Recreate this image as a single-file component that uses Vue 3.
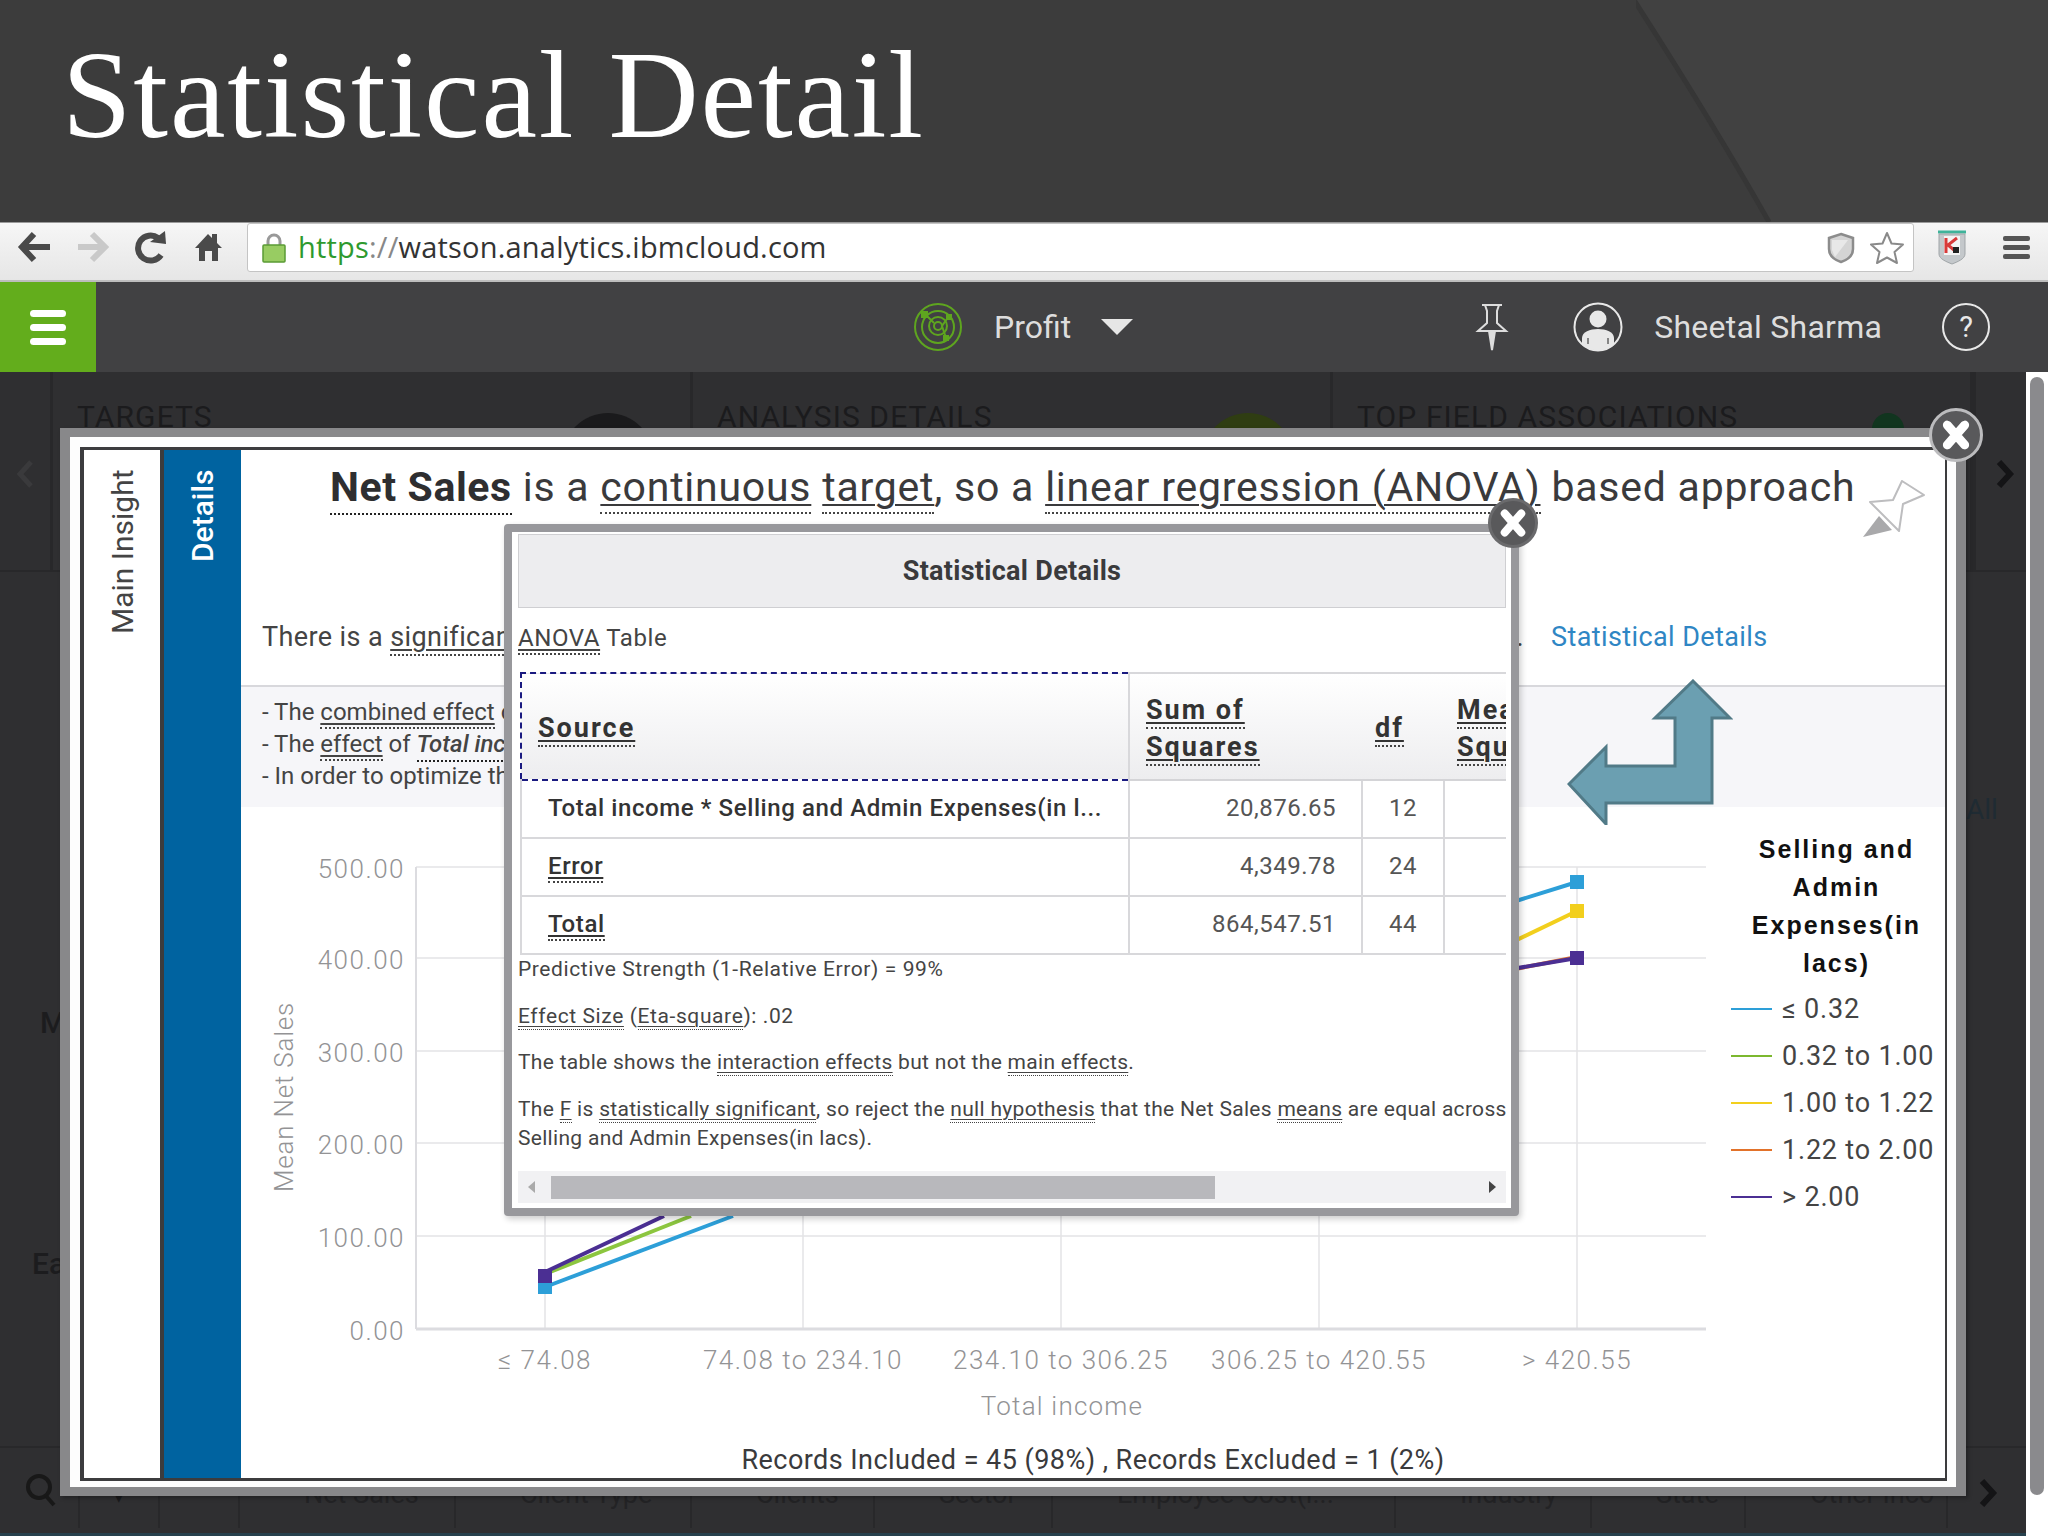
<script setup>
const cards = [
  { title: 'TARGETS', dot: 'card__dot--dark' },
  { title: 'ANALYSIS DETAILS', dot: 'card__dot--green' },
  { title: 'TOP FIELD ASSOCIATIONS', dot: 'card__dot--teal' },
]

const filters = [
  { name: 'Net Sales', width: 216 },
  { name: 'Client Type', width: 236 },
  { name: 'Clients', width: 183 },
  { name: 'Sector', width: 178 },
  { name: 'Employee Cost(i...', width: 343 },
  { name: 'Industry', width: 196 },
  { name: 'State', width: 154 },
  { name: 'Other Inco', width: 202 },
]

const yTicks = [
  { label: '500.00', y: 867 },
  { label: '400.00', y: 958 },
  { label: '300.00', y: 1051 },
  { label: '200.00', y: 1143 },
  { label: '100.00', y: 1236 },
  { label: '0.00', y: 1329 },
]

const xTicks = [
  { label: '≤ 74.08', x: 545 },
  { label: '74.08 to 234.10', x: 803 },
  { label: '234.10 to 306.25', x: 1061 },
  { label: '306.25 to 420.55', x: 1319 },
  { label: '> 420.55', x: 1577 },
]

const series = [
  { color: '#2d9fd8', points: '545,1287 733,1216', end: '1500,906 1577,882', y0: 1287, y1: 882 },
  { color: '#f2cf1d', points: '', end: '1500,948 1577,911', y0: null, y1: 911 },
  { color: '#e2722a', points: '', end: '1500,972 1577,957', y0: null, y1: null },
  { color: '#8cc63f', points: '545,1274 691,1216', end: '', y0: null, y1: null },
  { color: '#4b2f93', points: '545,1272 664,1216', end: '1500,971 1577,958', y0: 1276, y1: 958 },
]

const legend = [
  { label: '≤ 0.32', color: '#2d9fd8' },
  { label: '0.32 to 1.00', color: '#7cb82f' },
  { label: '1.00 to 1.22', color: '#f2cf1d' },
  { label: '1.22 to 2.00', color: '#e2722a' },
  { label: '> 2.00', color: '#4b2f93' },
]

const rows = [
  { source: 'Total income * Selling and Admin Expenses(in l...', sum: '20,876.65', df: '12', term: false },
  { source: 'Error', sum: '4,349.78', df: '24', term: true },
  { source: 'Total', sum: '864,547.51', df: '44', term: true },
]
</script>

<template>
  <div class="page">
    <header class="slide-title">
      <svg class="slide-title__swoosh" width="412" height="222" viewBox="0 0 412 222">
        <path d="M0 0 C50 78 100 160 135 222 L412 222 L412 0 Z" fill="#414141" />
        <path d="M-2 0 C48 78 98 160 133 222" fill="none" stroke="#363636" stroke-width="5" />
      </svg>
      <h1 class="slide-title__text">Statistical Detail</h1>
    </header>

    <div class="browser">
      <svg class="browser__nav" width="226" height="40" viewBox="0 0 226 40">
        <path d="M22 20 H50 M34 7 L22 20 L34 33" fill="none" stroke="#4a4a4a" stroke-width="6" />
        <path d="M78 20 H104 M92 7 L105 20 L92 33" fill="none" stroke="#c9c9c9" stroke-width="6" />
        <path d="M161 28 A12.5 12.5 0 1 1 158 11" fill="none" stroke="#4a4a4a" stroke-width="6" />
        <path d="M150 15 L166 17 L165 4 Z" fill="#4a4a4a" />
        <path d="M195 21 L208 7 L212 11 V7 H217 V16 L222 21 H218 V34 H212 V24 H205 V34 H199 V21 Z" fill="#4a4a4a" />
      </svg>
      <div class="browser__address">
        <svg width="24" height="30" viewBox="0 0 24 30">
          <path d="M6 13 V8 A6 6 0 0 1 18 8 V13" fill="none" stroke="#999" stroke-width="3" />
          <rect x="1" y="12" width="22" height="17" rx="1" fill="#98cc62" stroke="#5a9a35" stroke-width="1.5" />
        </svg>
        <span class="browser__url"><span class="browser__scheme">https</span><span class="browser__slashes">://</span>watson.analytics.ibmcloud.com</span>
        <svg class="browser__shield" width="30" height="32" viewBox="0 0 30 32">
          <path d="M15 2 L27 6 V17 C27 24 21 28 15 30 C9 28 3 24 3 17 V6 Z" fill="#d4d4d4" stroke="#8c8c8c" stroke-width="2.5" />
          <path d="M22 8 L9 25 L6 18 V8 Z" fill="#e8e8e8" />
        </svg>
        <svg width="36" height="34" viewBox="0 0 36 34">
          <path d="M18 2 L22.5 12.5 L34 13.5 L25.5 21 L28 32 L18 26.5 L8 32 L10.5 21 L2 13.5 L13.5 12.5 Z" fill="#fff" stroke="#8a8a8a" stroke-width="2" stroke-linejoin="round" />
        </svg>
      </div>
      <svg class="browser__kaspersky" width="30" height="35" viewBox="0 0 30 35">
        <path d="M1 2 H29" stroke="#3fb39a" stroke-width="3" />
        <path d="M2 4 H28 V24 C28 29 20 32 15 34 C10 32 2 29 2 24 Z" fill="#c4c8cb" stroke="#a0a5a8" />
        <rect x="7" y="6" width="16" height="19" fill="#f4f4f4" />
        <path d="M9 8 V23 M20 8 L11 15 L17 20" fill="none" stroke="#d83a3a" stroke-width="3" />
        <rect x="16" y="17" width="6" height="6" fill="#222" />
      </svg>
      <span class="browser__menu"><i></i><i></i><i></i></span>
    </div>

    <nav class="app-nav">
      <button type="button" class="app-nav__burger"><i></i><i></i><i></i></button>
      <div class="app-nav__center">
        <svg width="50" height="50" viewBox="0 0 50 50" fill="none" stroke="#5ea51f" stroke-width="2">
          <circle cx="25" cy="25" r="23" />
          <circle cx="25" cy="25" r="16" />
          <circle cx="25" cy="24" r="9" />
          <circle cx="25" cy="24" r="4" />
          <path d="M11 11 L21 21 M36 14 L29 24 L33 36" />
          <rect x="8" y="9" width="7" height="7" fill="#5ea51f" stroke="none" />
          <rect x="33" y="12" width="6" height="6" fill="#5ea51f" stroke="none" />
          <rect x="30" y="33" width="6" height="6" fill="#5ea51f" stroke="none" />
        </svg>
        <span class="app-nav__project">Profit</span>
        <span class="app-nav__caret"></span>
      </div>
      <div class="app-nav__right">
        <svg width="36" height="48" viewBox="0 0 36 48" fill="none" stroke="#ddd" stroke-width="2">
          <path d="M8 2 H28 M11 2 L13 8 V20 L4 28 H32 L23 20 V8 L25 2" />
          <path d="M15 28 L18 47 L21 28" fill="#ddd" />
        </svg>
        <svg class="app-nav__avatar" width="50" height="50" viewBox="0 0 50 50">
          <circle cx="25" cy="25" r="23.5" fill="none" stroke="#e8e8e8" stroke-width="2" />
          <circle cx="25" cy="17" r="8.5" fill="#e8e8e8" />
          <path d="M9 43 V36 C9 30 17 27 25 27 C33 27 41 30 41 36 V43 C33 50 17 50 9 43 Z" fill="#e8e8e8" />
          <path d="M15 36 V42 M35 36 V42" stroke="#666" stroke-width="1.5" />
        </svg>
        <span class="app-nav__user">Sheetal Sharma</span>
        <span class="app-nav__help">?</span>
      </div>
    </nav>

    <main class="workspace">
      <section class="cards">
        <div class="cards__edge"></div>
        <div v-for="card in cards" :key="card.title" class="card">
          <span class="card__title">{{ card.title }}</span>
          <span class="card__dot" :class="card.dot"></span>
        </div>
        <div class="cards__edge cards__edge--right"></div>
      </section>

      <div class="side-notes">
        <span class="side-notes__m">M</span>
        <span class="side-notes__all">All</span>
        <span class="side-notes__ea">Ea</span>
      </div>

      <footer class="filters">
        <span class="filters__search">
          <svg width="34" height="36" viewBox="0 0 34 36" fill="none" stroke="#181818" stroke-width="4">
            <circle cx="15" cy="15" r="11" />
            <path d="M22 24 L30 33" />
          </svg>
        </span>
        <span class="filters__sort">▾</span>
        <span class="filters__sort"></span>
        <span v-for="item in filters" :key="item.name" class="filters__item" :style="{ width: item.width + 'px' }"><i></i>{{ item.name }}</span>
      </footer>

      <svg class="chevron chevron--left" width="18" height="28" viewBox="0 0 18 28">
        <path d="M15 2 L4 14 L15 26" fill="none" stroke="#3a3a3c" stroke-width="5" />
      </svg>
      <svg class="chevron chevron--right" width="18" height="28" viewBox="0 0 18 28">
        <path d="M3 2 L14 14 L3 26" fill="none" stroke="#141416" stroke-width="6" />
      </svg>
      <svg class="chevron chevron--bottom" width="20" height="28" viewBox="0 0 18 28">
        <path d="M3 2 L14 14 L3 26" fill="none" stroke="#141416" stroke-width="6" />
      </svg>
    </main>

    <div class="scrollbar"><div class="scrollbar__thumb"></div></div>

    <section class="modal">
      <button type="button" class="close close--large" aria-label="Close">
        <svg width="30" height="30" viewBox="0 0 24 24"><path d="M5 4 L19 20 M19 4 L5 20" stroke="#fff" stroke-width="7" stroke-linecap="round" /></svg>
      </button>
      <div class="modal__frame">
        <aside class="tabs">
          <div class="tabs__tab"><span>Main Insight</span></div>
          <div class="tabs__tab tabs__tab--active"><span>Details</span></div>
        </aside>

        <div class="content">
          <div class="summary">
            <h2 class="summary__heading"><strong class="dotted">Net Sales</strong> is a <span class="term">continuous</span> <span class="term">target</span>, so a <span class="term">linear regression (ANOVA)</span> based approach</h2>
            <svg class="summary__pin" width="62" height="58" viewBox="0 0 62 58">
              <path d="M0 57 L16 36 L29 50 Z" fill="#a9a9ab" />
              <path d="M7 22 L30 20 L39 1 L61 15 L40 24 L36 51 Z" fill="#fff" stroke="#bdbdbf" stroke-width="2" stroke-linejoin="round" />
            </svg>
            <div class="summary__intro">
              <span class="summary__sentence">
                <span>There is a <span class="term">significant</span></span>
                <span>.</span>
              </span>
              <a class="summary__link">Statistical Details</a>
            </div>
          </div>

          <div class="bullets">
            <p>- The <span class="term">combined effect</span> of</p>
            <p>- The <span class="term">effect</span> of <em class="dotted">Total income</em></p>
            <p>- In order to optimize the</p>
            <svg class="bullets__arrow" width="166" height="146" viewBox="0 0 166 146">
              <path d="M126 2 L163 39 L145 39 L145 124 L39 124 L39 145 L2 105 L39 68 L39 87 L108 87 L108 39 L88 39 Z" fill="#6b9fb1" stroke="#517a87" stroke-width="3" />
            </svg>
          </div>

          <div class="chart-area">
            <svg class="chart" width="1480" height="671" viewBox="241 807 1480 671">
              <g stroke="#e3e3e6" stroke-width="1.5">
                <line v-for="t in yTicks" :key="t.y" x1="416" x2="1706" :y1="t.y" :y2="t.y" />
                <line v-for="t in xTicks" :key="t.x" :x1="t.x" :x2="t.x" y1="867" y2="1329" />
              </g>
              <line x1="416" x2="416" y1="867" y2="1329" stroke="#dcdce0" stroke-width="2" />
              <line x1="416" x2="1706" y1="1329" y2="1329" stroke="#dcdce0" stroke-width="3" />
              <g v-for="s in series" :key="s.color" fill="none" :stroke="s.color" stroke-width="4">
                <polyline v-if="s.points" :points="s.points" />
                <polyline v-if="s.end" :points="s.end" />
                <rect v-if="s.y0" x="538" :y="s.y0 - 7" width="14" height="14" :fill="s.color" stroke="none" />
                <rect v-if="s.y1" x="1570" :y="s.y1 - 7" width="14" height="14" :fill="s.color" stroke="none" />
              </g>
              <g class="chart__ticks">
                <text v-for="t in yTicks" :key="t.label" x="405" :y="t.y + 11" text-anchor="end">{{ t.label }}</text>
                <text v-for="t in xTicks" :key="t.label" :x="t.x" y="1369" text-anchor="middle">{{ t.label }}</text>
              </g>
              <text class="chart__axis-title" x="1062" y="1415" text-anchor="middle">Total income</text>
              <text class="chart__axis-title chart__axis-title--y" transform="translate(293 1097) rotate(-90)" text-anchor="middle">Mean Net Sales</text>
              <text class="chart__records" x="1093" y="1469" text-anchor="middle">Records Included = 45 (98%) , Records Excluded = 1 (2%)</text>
            </svg>

            <aside class="legend">
              <h3 class="legend__title">Selling and Admin Expenses(in lacs)</h3>
              <div v-for="item in legend" :key="item.label" class="legend__item">
                <i :style="{ backgroundColor: item.color }"></i>
                <span>{{ item.label }}</span>
              </div>
            </aside>
          </div>
        </div>
      </div>
    </section>

    <section class="popup">
      <button type="button" class="close close--small" aria-label="Close">
        <svg width="28" height="28" viewBox="0 0 24 24"><path d="M5 4 L19 20 M19 4 L5 20" stroke="#fff" stroke-width="7" stroke-linecap="round" /></svg>
      </button>
      <h2 class="popup__title">Statistical Details</h2>
      <p class="popup__sub"><span class="term">ANOVA</span> Table</p>

      <div class="table-wrap">
        <table class="anova">
          <thead>
            <tr>
              <th class="anova__source anova__source--focus"><span class="term">Source</span></th>
              <th class="anova__sum"><span class="term">Sum of</span><br /><span class="term">Squares</span></th>
              <th class="anova__df"><span class="term">df</span></th>
              <th class="anova__mean"><span class="term">Mean</span><br /><span class="term">Square</span></th>
            </tr>
          </thead>
          <tbody>
            <tr v-for="row in rows" :key="row.source">
              <td class="anova__name"><span :class="{ term: row.term }">{{ row.source }}</span></td>
              <td class="anova__num">{{ row.sum }}</td>
              <td class="anova__num anova__num--df">{{ row.df }}</td>
              <td></td>
            </tr>
          </tbody>
        </table>
      </div>

      <div class="notes">
        <p class="notes__wide">Predictive Strength (1-Relative Error) = 99%</p>
        <p class="notes__wide"><span class="term">Effect Size</span> (<span class="term">Eta-square</span>): .02</p>
        <p>The table shows the <span class="term">interaction effects</span> but not the <span class="term">main effects</span>.</p>
        <p>The <span class="term">F</span> is <span class="term">statistically significant</span>, so reject the <span class="term">null hypothesis</span> that the Net Sales <span class="term">means</span> are equal across<br />Selling and Admin Expenses(in lacs).</p>
      </div>

      <div class="hscroll">
        <span class="hscroll__arrow hscroll__arrow--left"></span>
        <span class="hscroll__thumb"></span>
        <span class="hscroll__arrow hscroll__arrow--right"></span>
      </div>
    </section>
  </div>
</template>

<style scoped>
.page {
  position: relative;
  display: flex;
  width: 2048px;
  height: 1536px;
  flex-direction: column;
  overflow: hidden;
  background-color: #2f2f31;
  font-family: Roboto, "Liberation Sans", sans-serif;
}

.slide-title {
  position: relative;
  height: 222px;
  flex: none;
  box-sizing: border-box;
  padding: 25px 0 0 62px;
  background-color: #3c3c3c;
}

.slide-title__swoosh {
  position: absolute;
  top: 0;
  left: 1636px;
}

.slide-title__text {
  position: relative;
  margin: 0;
  color: #fff;
  font-family: "Liberation Serif", serif;
  font-size: 125px;
  font-weight: 400;
  letter-spacing: 1.85px;
  line-height: 140px;
}

.browser {
  display: flex;
  height: 60px;
  flex: none;
  box-sizing: border-box;
  align-items: center;
  border-top: 1px solid #9a9a9a;
  border-bottom: 2px solid #bdbdbd;
  background: linear-gradient(#f6f6f6, #e6e6e6);
}

.browser__nav {
  flex: none;
  margin-top: -9px;
  margin-right: 21px;
}

.browser__address {
  display: flex;
  width: 1667px;
  height: 49px;
  box-sizing: border-box;
  align-items: center;
  border: 1px solid #c4c4c4;
  border-radius: 3px;
  margin-top: -8px;
  padding: 0 8px 0 14px;
  background-color: #fff;
}

.browser__url {
  margin-top: -2px;
  margin-left: 12px;
  color: #333;
  font-family: "Open Sans", sans-serif;
  font-size: 29px;
  letter-spacing: 0.2px;
}

.browser__scheme {
  color: #2e9a2e;
}

.browser__slashes {
  color: #888;
}

.browser__shield {
  margin-left: auto;
  margin-right: 13px;
}

.browser__kaspersky {
  margin-left: 23px;
  margin-top: -8px;
}

.browser__menu {
  display: flex;
  width: 27px;
  flex-direction: column;
  gap: 4px;
  margin-left: 36px;
  margin-top: -8px;
}

.browser__menu i {
  height: 5px;
  border-radius: 2px;
  background-color: #555;
}

.app-nav {
  display: flex;
  height: 90px;
  flex: none;
  align-items: center;
  background-color: #414143;
}

.app-nav__burger {
  display: flex;
  width: 96px;
  height: 90px;
  flex: none;
  flex-direction: column;
  align-items: center;
  justify-content: center;
  gap: 7px;
  border: none;
  padding: 0;
  background-color: #63ad1c;
}

.app-nav__burger i {
  width: 36px;
  height: 7px;
  border-radius: 4px;
  background-color: #fff;
}

.app-nav__center {
  display: flex;
  align-items: center;
  margin-left: 817px;
}

.app-nav__project {
  margin-left: 31px;
  color: #ddd;
  font-size: 32px;
  font-weight: 400;
}

.app-nav__caret {
  width: 0;
  height: 0;
  margin-left: 30px;
  border-top: 16px solid #e6e6e6;
  border-right: 16px solid transparent;
  border-left: 16px solid transparent;
}

.app-nav__right {
  display: flex;
  align-items: center;
  margin-left: 341px;
}

.app-nav__avatar {
  margin-left: 63px;
}

.app-nav__user {
  margin-left: 31px;
  color: #ddd;
  font-size: 32px;
  font-weight: 400;
  letter-spacing: 0.25px;
}

.app-nav__help {
  display: flex;
  width: 48px;
  height: 48px;
  box-sizing: border-box;
  align-items: center;
  justify-content: center;
  border: 2px solid #e8e8e8;
  border-radius: 50%;
  margin-left: 60px;
  color: #e8e8e8;
  font-size: 29px;
}

.workspace {
  position: relative;
  display: flex;
  flex: 1;
  flex-direction: column;
  color: #1c1c1e;
}

.cards {
  display: flex;
  height: 198px;
  flex: none;
  border-bottom: 2px solid #28282a;
}

.cards__edge {
  width: 50px;
  flex: none;
  border-right: 3px solid #28282a;
}

.cards__edge--right {
  flex: 1;
  width: auto;
  border-right: none;
  border-left: 3px solid #28282a;
}

.card {
  position: relative;
  width: 640px;
  flex: none;
  box-sizing: border-box;
  overflow: hidden;
  border-right: 3px solid #28282a;
  padding: 27px 0 0 24px;
  font-size: 30px;
  letter-spacing: 1.1px;
}

.card:last-of-type {
  width: 642px;
}

.card__title {
  color: #1b1b1d;
}

.card__dot {
  position: absolute;
  top: 41px;
  width: 92px;
  height: 92px;
  border-radius: 50%;
}

.card__dot--dark {
  right: 36px;
  background-color: #1a1a1c;
}

.card__dot--green {
  right: 36px;
  background-color: #2f3d12;
}

.card__dot--teal {
  top: 41px;
  right: 66px;
  width: 32px;
  height: 32px;
  background-color: #11351f;
}

.side-notes {
  display: flex;
  flex: 1;
  flex-direction: column;
  padding: 0 0 0 32px;
  font-size: 30px;
  font-weight: 500;
}

.side-notes__m {
  margin: 433px 0 0 8px;
}

.side-notes__all {
  position: absolute;
  top: 421px;
  left: 1966px;
  color: #1f2b33;
  font-size: 28px;
  font-weight: 400;
}

.side-notes__ea {
  margin-top: 206px;
}

.filters {
  display: flex;
  height: 85px;
  flex: none;
  align-items: flex-start;
  border-top: 2px solid #28282a;
  border-bottom: 3px solid #27414d;
  color: #1a1a1c;
  font-size: 27px;
}

.filters__search {
  width: 80px;
  flex: none;
  box-sizing: border-box;
  padding: 24px 0 0 24px;
  border-right: 2px solid #28282a;
  height: 80px;
}

.filters__sort {
  width: 80px;
  height: 80px;
  flex: none;
  box-sizing: border-box;
  border-right: 2px solid #28282a;
  padding: 30px 0 0 32px;
}

.filters__item {
  display: flex;
  height: 80px;
  flex: none;
  box-sizing: border-box;
  align-items: flex-start;
  gap: 14px;
  border-right: 2px solid #28282a;
  padding: 30px 0 0 30px;
  overflow: hidden;
  color: #232325;
  white-space: nowrap;
}

.filters__item i {
  width: 20px;
  height: 5px;
  flex: none;
  margin-top: 12px;
  background-color: #1f3a4a;
}

.chevron {
  position: absolute;
}

.chevron--left {
  top: 88px;
  left: 16px;
}

.chevron--right {
  top: 88px;
  left: 1996px;
}

.chevron--bottom {
  top: 1107px;
  left: 1978px;
}

.scrollbar {
  position: absolute;
  top: 372px;
  right: 0;
  bottom: 0;
  width: 22px;
  box-sizing: border-box;
  padding: 5px 4px 0;
  background-color: #fff;
}

.scrollbar__thumb {
  height: 1118px;
  border-radius: 8px;
  background-color: #8a8a8d;
}

.modal {
  position: absolute;
  top: 428px;
  left: 60px;
  width: 1906px;
  height: 1068px;
  box-sizing: border-box;
  border: 10px solid #88888a;
  border-width: 9px 10px;
  background-color: #fdfdfd;
  padding: 10px 9px 6px 10px;
  box-shadow: 2px 2px 4px rgba(0, 0, 0, 0.3);
}

.modal__frame {
  display: flex;
  height: 100%;
  box-sizing: border-box;
  border: 3px solid #3c3c3e;
  border-left-width: 4px;
  border-right-width: 2px;
  background-color: #fff;
}

.tabs {
  display: flex;
  flex: none;
}

.tabs__tab {
  display: flex;
  width: 76px;
  justify-content: center;
  border-right: 4px solid #3c3c3e;
  padding-top: 22px;
  color: #444;
  font-size: 30px;
}

.tabs__tab span {
  writing-mode: vertical-rl;
  transform: rotate(180deg);
  height: 162px;
  white-space: nowrap;
}

.tabs__tab--active {
  width: 77px;
  border-right: none;
  background-color: #0063a0;
  color: #fff;
  font-weight: 500;
}

.tabs__tab--active span {
  height: 90px;
}

.content {
  display: flex;
  min-width: 0;
  flex: 1;
  flex-direction: column;
}

.term {
  border-bottom: 2px dotted #444;
  padding-bottom: 1px;
  text-decoration: underline;
  text-decoration-thickness: 2px;
  text-underline-offset: 3px;
}

.dotted {
  border-bottom: 2px dotted #222;
  padding-bottom: 2px;
}

.summary {
  position: relative;
  display: flex;
  height: 237px;
  flex: none;
  flex-direction: column;
  box-sizing: border-box;
  border-bottom: 2px solid #d8d8dc;
  padding: 8px 0 0 89px;
}

.summary__heading {
  margin: 0;
  color: #3a3a3c;
  font-size: 41px;
  font-weight: 400;
  letter-spacing: 0.77px;
  line-height: 58px;
  white-space: nowrap;
}

.summary__heading strong {
  color: #2e2e30;
  font-weight: 700;
  letter-spacing: 0.6px;
}

.summary__pin {
  position: absolute;
  top: 30px;
  left: 1622px;
}

.summary__intro {
  display: flex;
  align-items: center;
  margin: 105px 0 0 -68px;
  color: #444;
  font-size: 27px;
  letter-spacing: 0.4px;
}

.summary__sentence {
  display: flex;
  width: 1262px;
  justify-content: space-between;
}

.summary__link {
  margin-left: 27px;
  color: #2f86c4;
}

.bullets {
  position: relative;
  height: 120px;
  flex: none;
  box-sizing: border-box;
  padding: 9px 0 0 21px;
  background-color: #f6f6f9;
  color: #444;
  font-size: 24px;
  line-height: 32px;
}

.bullets p {
  margin: 0;
}

.bullets em {
  font-weight: 500;
}

.bullets__arrow {
  position: absolute;
  top: -8px;
  left: 1326px;
}

.chart-area {
  display: flex;
  min-height: 0;
  flex: 1;
}

.chart {
  flex: none;
  display: block;
}

.chart__ticks text {
  fill: #939395;
  font-size: 26px;
  font-weight: 300;
  letter-spacing: 1.5px;
}

.chart__axis-title {
  fill: #939395;
  font-size: 26px;
  font-weight: 300;
  letter-spacing: 1.2px;
}

.chart__axis-title--y {
  letter-spacing: 0.8px;
}

.chart__records {
  fill: #3a3a3c;
  font-size: 27px;
  letter-spacing: 0.45px;
}

.legend {
  width: 224px;
  flex: none;
  box-sizing: border-box;
  padding: 23px 3px 0 10px;
  color: #444;
  font-size: 27px;
}

.legend__title {
  margin: 0 0 3px;
  color: #111;
  font-family: "Liberation Sans", sans-serif;
  font-size: 25px;
  font-weight: 700;
  letter-spacing: 2px;
  line-height: 38px;
  text-align: center;
}

.legend__item {
  display: flex;
  height: 47px;
  align-items: center;
  gap: 10px;
  letter-spacing: 0.8px;
  white-space: nowrap;
}

.legend__item i {
  width: 41px;
  height: 2px;
  flex: none;
}

.popup {
  position: absolute;
  top: 524px;
  left: 504px;
  display: flex;
  width: 1015px;
  height: 692px;
  box-sizing: border-box;
  flex-direction: column;
  border: 8px solid #98989c;
  border-radius: 4px;
  padding: 2px 5px 5px 6px;
  background-color: #fff;
  box-shadow: 2px 3px 6px rgba(0, 0, 0, 0.2);
}

.popup__title {
  display: flex;
  height: 74px;
  flex: none;
  box-sizing: border-box;
  align-items: center;
  justify-content: center;
  border: 1px solid #cfcfd2;
  margin: 0;
  background-color: #ededef;
  color: #3a3a3c;
  font-size: 27px;
  font-weight: 700;
  letter-spacing: 0.3px;
}

.popup__sub {
  height: 64px;
  flex: none;
  box-sizing: border-box;
  margin: 0;
  padding-top: 14px;
  color: #444;
  font-size: 24px;
  letter-spacing: 0.6px;
  line-height: 32px;
}

.table-wrap {
  flex: none;
  overflow: hidden;
}

.anova {
  width: 1020px;
  border-collapse: collapse;
  margin-left: 2px;
  table-layout: fixed;
  color: #333;
  font-size: 24px;
}

.anova th {
  height: 107px;
  box-sizing: border-box;
  padding: 4px 0 0;
  border-top: 2px solid #d8d8db;
  border-bottom: 2px solid #d4d4d7;
  background: linear-gradient(#fff, #ededef);
  color: #333;
  font-size: 27px;
  font-weight: 700;
  letter-spacing: 2px;
  line-height: 37px;
  text-align: left;
}

.anova__source {
  width: 608px;
  padding-left: 16px !important;
}

.anova__source--focus {
  border: 2px dashed #1a1a80 !important;
  border-right: 2px solid #d8d8db !important;
}

.anova__sum {
  width: 233px;
  padding-left: 16px !important;
}

.anova__df {
  width: 82px;
  padding-left: 13px !important;
}

.anova__mean {
  padding-left: 13px !important;
  white-space: nowrap;
}

.anova td {
  height: 58px;
  box-sizing: border-box;
  border: 2px solid #d8d8db;
  border-left: none;
  padding: 0 0 2px;
}

.anova td:last-child {
  border-right: none;
}

.anova tbody tr:first-child td:first-child {
  border-top: none;
}

.anova__name {
  padding-left: 26px !important;
  font-weight: 500;
  letter-spacing: 0.6px;
  white-space: nowrap;
}

.anova tr td:first-child {
  border-left: 2px solid #d8d8db;
}

.anova__num {
  padding-right: 25px !important;
  color: #555;
  letter-spacing: 0.5px;
  text-align: right;
}

.anova__num--df {
  padding-right: 26px !important;
}

.notes {
  flex: 1;
  overflow: hidden;
  color: #444;
  font-size: 21px;
  letter-spacing: 0.3px;
  line-height: 29px;
}

.notes p {
  margin: 0 0 17.5px;
  white-space: nowrap;
}

.notes .notes__wide {
  letter-spacing: 0.6px;
}

.notes .term {
  border-bottom-width: 1px;
  text-decoration-thickness: 1px;
}

.hscroll {
  display: flex;
  height: 32px;
  flex: none;
  align-items: center;
  padding: 0 10px;
  background-color: #f1f1f3;
}

.hscroll__thumb {
  width: 664px;
  height: 23px;
  margin-left: 16px;
  background-color: #b8b8bc;
}

.hscroll__arrow {
  width: 0;
  height: 0;
  border-top: 6px solid transparent;
  border-bottom: 6px solid transparent;
}

.hscroll__arrow--left {
  border-right: 7px solid #aaa;
}

.hscroll__arrow--right {
  margin-left: auto;
  border-left: 7px solid #444;
}

.close {
  position: absolute;
  z-index: 2;
  display: flex;
  box-sizing: border-box;
  align-items: center;
  justify-content: center;
  border-radius: 50%;
  padding: 0;
  background-color: #59595b;
}

.close--large {
  top: -29px;
  right: -27px;
  width: 54px;
  height: 54px;
  border: 3px solid #bcbcbe;
}

.close--small {
  top: -34px;
  right: -27px;
  width: 50px;
  height: 50px;
  border: 3px solid #6a6a6c;
}
</style>

<style>
body {
  margin: 0;
}
</style>
